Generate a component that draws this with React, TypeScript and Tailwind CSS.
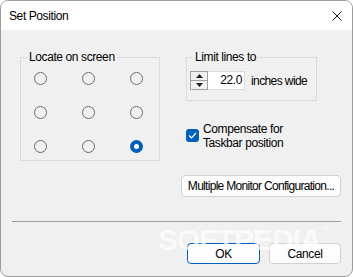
import React from 'react';

const Radio: React.FC<{ checked?: boolean }> = ({ checked }) =>
  checked ? (
    <span className="flex h-[13px] w-[13px] items-center justify-center rounded-full bg-[#005fb8]">
      <span className="h-[5px] w-[5px] rounded-full bg-white" />
    </span>
  ) : (
    <span className="block h-[13px] w-[13px] rounded-full border border-[#6b6b6b]" />
  );

const GroupLabel: React.FC<{ children: React.ReactNode }> = ({ children }) => (
  <span className="absolute left-[6px] top-[-8px] bg-[#f0f0f0] px-[2px] leading-[14px]">{children}</span>
);

const App: React.FC = () => {
  const positions = [false, false, false, false, false, false, false, false, true];

  return (
    <div className="h-[277px] w-[353px] bg-white">
      <div className="relative flex h-[277px] w-[353px] flex-col overflow-hidden rounded-[8px] border border-[#9c9c9c] bg-[#f0f0f0] font-['Liberation_Sans',Arial,sans-serif] text-[12px] tracking-[-0.4px] text-black">
        {/* title bar */}
        <div className="flex h-[29px] shrink-0 items-center justify-between bg-white pl-[8px] pr-[10px]">
          <span>Set Position</span>
          <svg width="10" height="10" viewBox="0 0 10 10" fill="none" stroke="#1a1a1a" strokeWidth="1">
            <path d="M0.5 0.5 L9.5 9.5 M9.5 0.5 L0.5 9.5" />
          </svg>
        </div>

        <div className="flex pl-[19px] pt-[27px]">
          {/* locate on screen */}
          <div className="relative h-[104px] w-[140px] border border-[#dcdcdc]">
            <GroupLabel>Locate on screen</GroupLabel>
            <div className="grid grid-cols-[13px_13px_13px] gap-x-[35px] gap-y-[21px] pl-[13px] pt-[14px]">
              {positions.map((p, i) => (
                <Radio key={i} checked={p} />
              ))}
            </div>
          </div>

          <div className="ml-[21px] flex flex-col">
            <div className="relative ml-[5px] h-[44px] w-[131px] border border-[#dcdcdc]">
              <GroupLabel>Limit lines to</GroupLabel>
              <div className="ml-[3px] mt-[13px] flex items-center">
                <div className="flex h-[19px]">
                  <div className="flex w-[18px] flex-col border border-[#a0a0a0] bg-[#f0f0f0]">
                    <div className="flex flex-1 items-center justify-center border-b border-[#a0a0a0]">
                      <svg width="7" height="4" viewBox="0 0 7 4"><path d="M3.5 0 L7 4 L0 4 Z" fill="#222" /></svg>
                    </div>
                    <div className="flex flex-1 items-center justify-center">
                      <svg width="7" height="4" viewBox="0 0 7 4"><path d="M0 0 L7 0 L3.5 4 Z" fill="#222" /></svg>
                    </div>
                  </div>
                  <div className="w-[37px] border-y border-r border-[#dadada] bg-white pr-[2px] text-right leading-[17px]">22.0</div>
                </div>
                <span className="ml-[6px] tracking-[-0.6px]">inches wide</span>
              </div>
            </div>

            <div className="ml-[5px] mt-[21px] flex items-start">
              <span className="mt-[7px] flex h-[13px] w-[13px] items-center justify-center rounded-[3px] bg-[#005fb8]">
                <svg width="9" height="7" viewBox="0 0 9 7" fill="none" stroke="white" strokeWidth="1.2">
                  <path d="M1 3.5 L3.5 6 L8 1" />
                </svg>
              </span>
              <span className="ml-[4px] leading-[14px]">
                Compensate for
                <br />
                Taskbar position
              </span>
            </div>

            <button className="mt-[25px] flex h-[22px] w-[160px] items-center justify-center rounded-[4px] border border-[#d0d0d0] bg-[#fdfdfd] tracking-[-0.7px]">
              Multiple Monitor Configuration...
            </button>
          </div>
        </div>

        <div className="mx-[11px] mt-[24px] h-px bg-[#a0a0a0]" />

        <div className="mt-[21px] flex justify-end gap-[9px] pr-[11px]">
          <button className="flex h-[21px] w-[73px] items-center justify-center rounded-[4px] border border-[#005fb8] bg-[#fdfdfd]">
            OK
          </button>
          <button className="flex h-[21px] w-[72px] items-center justify-center rounded-[4px] border border-[#d0d0d0] bg-[#fdfdfd]">
            Cancel
          </button>
        </div>

        {/* watermark */}
        <div className="pointer-events-none absolute left-[157px] top-[224px] flex items-start text-[30px] font-bold leading-none tracking-[-1px] text-white opacity-70">
          SOFTPEDIA
          <span className="ml-[2px] text-[9px] tracking-normal">®</span>
        </div>
      </div>
    </div>
  );
};

export default App;
